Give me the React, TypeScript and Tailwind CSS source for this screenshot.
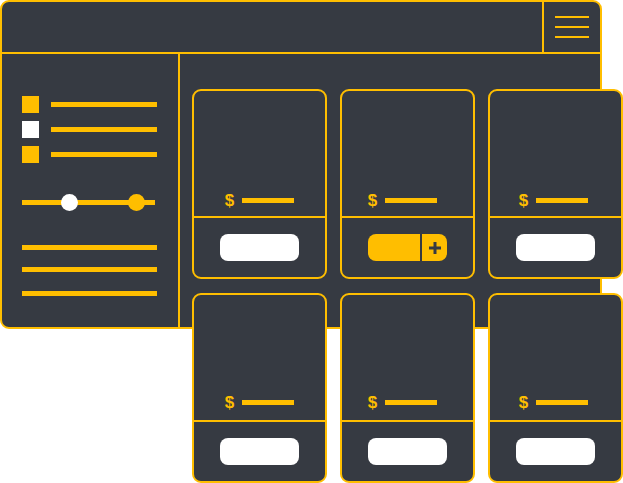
type Card = { active?: boolean };

const cards: Card[] = [{}, { active: true }, {}, {}, {}, {}];

// the price rows sit a little off-centre per column in the drawing
const colShift = ["", "mr-[10px]", "mr-[4px]"];
const rowPad = ["pb-[8px]", "pb-[10px]"];

function PriceCard({ active, index }: Card & { index: number }) {
  return (
    <div className="w-[135px] h-[190px] rounded-[9px] border-2 border-[#ffbe00] bg-[#363a42] flex flex-col">
      <div
        className={`h-[127px] border-b-2 border-[#ffbe00] flex items-end justify-center ${rowPad[Math.floor(index / 3)]}`}
      >
        <div className={`h-[16px] flex items-center gap-[8px] ${colShift[index % 3]}`}>
          <span className="text-[17px] leading-none font-bold text-[#ffbe00]">$</span>
          <span className="block w-[52px] h-[5px] bg-[#ffbe00]" />
        </div>
      </div>
      <div className="flex-1 flex items-center justify-center">
        {active ? (
          <div className="flex gap-[2px] w-[79px] h-[27px]">
            <span className="block w-[52px] h-full bg-[#ffbe00] rounded-l-[8px]" />
            <span className="flex-1 h-full bg-[#ffbe00] rounded-r-[8px] flex items-center justify-center">
              <svg width="12" height="12" viewBox="0 0 12 12" aria-hidden="true">
                <rect x="4.5" y="0" width="3" height="12" fill="#363a42" />
                <rect x="0" y="4.5" width="12" height="3" fill="#363a42" />
              </svg>
            </span>
          </div>
        ) : (
          <span className="block w-[79px] h-[27px] bg-white rounded-[8px]" />
        )}
      </div>
    </div>
  );
}

export default function App() {
  return (
    <div
      className="w-[623px] h-[483px] bg-white overflow-hidden"
      style={{ fontFamily: '"Liberation Sans", Arial, sans-serif' }}
    >
      <div className="w-[602px] h-[329px] rounded-[9px] border-2 border-[#ffbe00] bg-[#363a42] flex flex-col">
        {/* header */}
        <div className="h-[52px] shrink-0 border-b-2 border-[#ffbe00] flex">
          <div className="ml-auto w-[58px] border-l-2 border-[#ffbe00] flex flex-col items-center justify-center gap-[8px]">
            <span className="block w-[34px] h-[2px] bg-[#ffbe00]" />
            <span className="block w-[34px] h-[2px] bg-[#ffbe00]" />
            <span className="block w-[34px] h-[2px] bg-[#ffbe00]" />
          </div>
        </div>

        <div className="flex-1 min-h-0 flex">
          {/* sidebar */}
          <div className="w-[178px] shrink-0 border-r-2 border-[#ffbe00] pl-[20px] pt-[42px] flex flex-col">
            <div className="flex flex-col gap-[8px]">
              {["bg-[#ffbe00]", "bg-white", "bg-[#ffbe00]"].map((c, i) => (
                <div key={i} className="flex items-center gap-[12px] h-[17px]">
                  <span className={`block w-[17px] h-[17px] ${c}`} />
                  <span className="block w-[106px] h-[5px] bg-[#ffbe00]" />
                </div>
              ))}
            </div>

            <div className="relative mt-[31px] w-[133px] h-[17px] flex items-center">
              <span className="block w-full h-[5px] bg-[#ffbe00]" />
              <span className="absolute left-[39px] top-0 w-[17px] h-[17px] rounded-full bg-white" />
              <span className="absolute left-[106px] top-0 w-[17px] h-[17px] rounded-full bg-[#ffbe00]" />
            </div>

            <span className="block mt-[34px] w-[135px] h-[5px] bg-[#ffbe00]" />
            <span className="block mt-[17px] w-[135px] h-[5px] bg-[#ffbe00]" />
            <span className="block mt-[19px] w-[135px] h-[5px] bg-[#ffbe00]" />
          </div>

          {/* product grid, spills past the window */}
          <div className="pl-[12px] pt-[35px]">
            <div className="grid grid-cols-[135px_135px_135px] gap-x-[13px] gap-y-[14px]">
              {cards.map((c, i) => (
                <PriceCard key={i} index={i} active={c.active} />
              ))}
            </div>
          </div>
        </div>
      </div>
    </div>
  );
}
